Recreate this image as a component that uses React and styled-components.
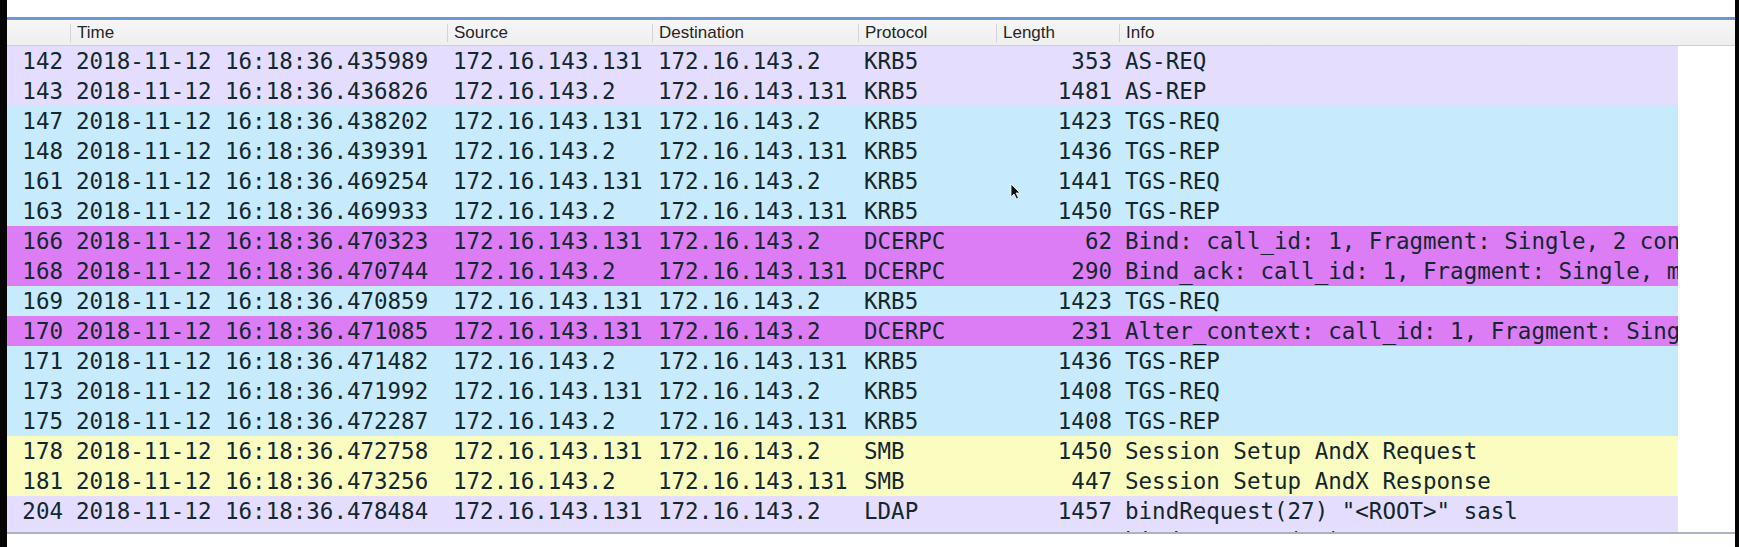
import React from "react";
import styled, { createGlobalStyle } from "styled-components";

const GlobalStyle = createGlobalStyle`
  html, body { margin: 0; padding: 0; background: #ffffff; }
  body { font-family: "Liberation Sans", Arial, sans-serif; }
`;

const COLS = "63px 377px 205px 206px 138px 123px 1fr";

const BG = {
  tcp: "#e4ddfd",
  udp: "#c7eafc",
  dce: "#dd7df5",
  smb: "#fbfcc0",
};

const Page = styled.div`
  position: relative;
  display: flex;
  width: 1739px;
  height: 547px;
  overflow: hidden;
  background: #ffffff;
`;

const EdgeBar = styled.div`
  flex: 0 0 ${(p) => p.$w}px;
  background: #050505;
`;

const Main = styled.div`
  flex: 1;
  display: flex;
  flex-direction: column;
  min-width: 0;
`;

const TopGap = styled.div`
  height: 17px;
  background: #ffffff;
`;

const Table = styled.div`
  display: flex;
  flex-direction: column;
  border-top: 3px solid #6a98d6;
  border-bottom: 2px solid #aab3c2;
`;

const Header = styled.div`
  display: grid;
  grid-template-columns: ${COLS};
  align-items: center;
  height: 25px;
  background: linear-gradient(#f6f6f6, #efefef);
  border-bottom: 1px solid #cfcfcf;
`;

const HeadCell = styled.div`
  height: 18px;
  line-height: 18px;
  padding-left: 6px;
  border-left: ${(p) => (p.$first ? "none" : "1px solid #d4d4d4")};
  font-family: "Liberation Sans", Arial, sans-serif;
  font-size: 17px;
  color: #262626;
  white-space: nowrap;
  overflow: hidden;
`;

const Body = styled.div`
  height: 486px;
  overflow: hidden;
  background: #ffffff;
`;

const Row = styled.div`
  display: grid;
  grid-template-columns: ${COLS};
  width: 1671px;
  height: 30px;
  background: ${(p) => BG[p.$kind]};
  font-family: "DejaVu Sans Mono", "Liberation Mono", monospace;
  font-size: 22.5px;
  line-height: 30px;
  color: #12272e;
  overflow: hidden;
`;

const Cell = styled.div`
  padding: 0 ${(p) => (p.$right ? "7px" : "0")} 0 ${(p) => (p.$right ? "0" : "6px")};
  text-align: ${(p) => (p.$right ? "right" : "left")};
  white-space: nowrap;
  overflow: hidden;
  text-overflow: clip;
`;

const Cursor = styled.svg`
  position: absolute;
  left: 1010px;
  top: 183px;
  width: 11px;
  height: 17px;
`;

const S = "172.16.143.131";
const D = "172.16.143.2";

const rows = [
  [142, "435989", S, D, "KRB5", 353, "AS-REQ", "tcp"],
  [143, "436826", D, S, "KRB5", 1481, "AS-REP", "tcp"],
  [147, "438202", S, D, "KRB5", 1423, "TGS-REQ", "udp"],
  [148, "439391", D, S, "KRB5", 1436, "TGS-REP", "udp"],
  [161, "469254", S, D, "KRB5", 1441, "TGS-REQ", "udp"],
  [163, "469933", D, S, "KRB5", 1450, "TGS-REP", "udp"],
  [166, "470323", S, D, "DCERPC", 62, "Bind: call_id: 1, Fragment: Single, 2 context items: DRSUAPI V4.0 (32bit NDR), DRSUAPI V4.0 (6cb71c2c-9812-4540-0300-000000000000) V1.0", "dce"],
  [168, "470744", D, S, "DCERPC", 290, "Bind_ack: call_id: 1, Fragment: Single, max_xmit: 5840 max_recv: 5840, 2 results: Acceptance, Negotiate ACK", "dce"],
  [169, "470859", S, D, "KRB5", 1423, "TGS-REQ", "udp"],
  [170, "471085", S, D, "DCERPC", 231, "Alter_context: call_id: 1, Fragment: Single, 1 context items: DRSUAPI V4.0 (32bit NDR)", "dce"],
  [171, "471482", D, S, "KRB5", 1436, "TGS-REP", "udp"],
  [173, "471992", S, D, "KRB5", 1408, "TGS-REQ", "udp"],
  [175, "472287", D, S, "KRB5", 1408, "TGS-REP", "udp"],
  [178, "472758", S, D, "SMB", 1450, "Session Setup AndX Request", "smb"],
  [181, "473256", D, S, "SMB", 447, "Session Setup AndX Response", "smb"],
  [204, "478484", S, D, "LDAP", 1457, "bindRequest(27) \"<ROOT>\" sasl", "tcp"],
  [205, "479340", D, S, "LDAP", 218, "bindResponse(27) success", "tcp"],
];

const headers = ["", "Time", "Source", "Destination", "Protocol", "Length", "Info"];

export default function App() {
  return (
    <>
      <GlobalStyle />
      <Page>
        <EdgeBar $w={7} />
        <Main>
          <TopGap />
          <Table>
            <Header>
              {headers.map((h, i) => (
                <HeadCell key={i} $first={i === 0}>
                  {h}
                </HeadCell>
              ))}
            </Header>
            <Body>
              {rows.map((r) => (
                <Row key={r[0]} $kind={r[7]}>
                  <Cell $right>{r[0]}</Cell>
                  <Cell>{`2018-11-12 16:18:36.${r[1]}`}</Cell>
                  <Cell>{r[2]}</Cell>
                  <Cell>{r[3]}</Cell>
                  <Cell>{r[4]}</Cell>
                  <Cell $right>{r[5]}</Cell>
                  <Cell>{r[6]}</Cell>
                </Row>
              ))}
            </Body>
          </Table>
        </Main>
        <EdgeBar $w={4} />
        <Cursor viewBox="0 0 11 17">
          <path
            d="M1 1 L1 14 L4 11 L6.5 16 L8.5 15 L6 10 L10 10 Z"
            fill="#111"
            stroke="#ffffff"
            strokeWidth="0.8"
            strokeLinejoin="round"
          />
        </Cursor>
      </Page>
    </>
  );
}
